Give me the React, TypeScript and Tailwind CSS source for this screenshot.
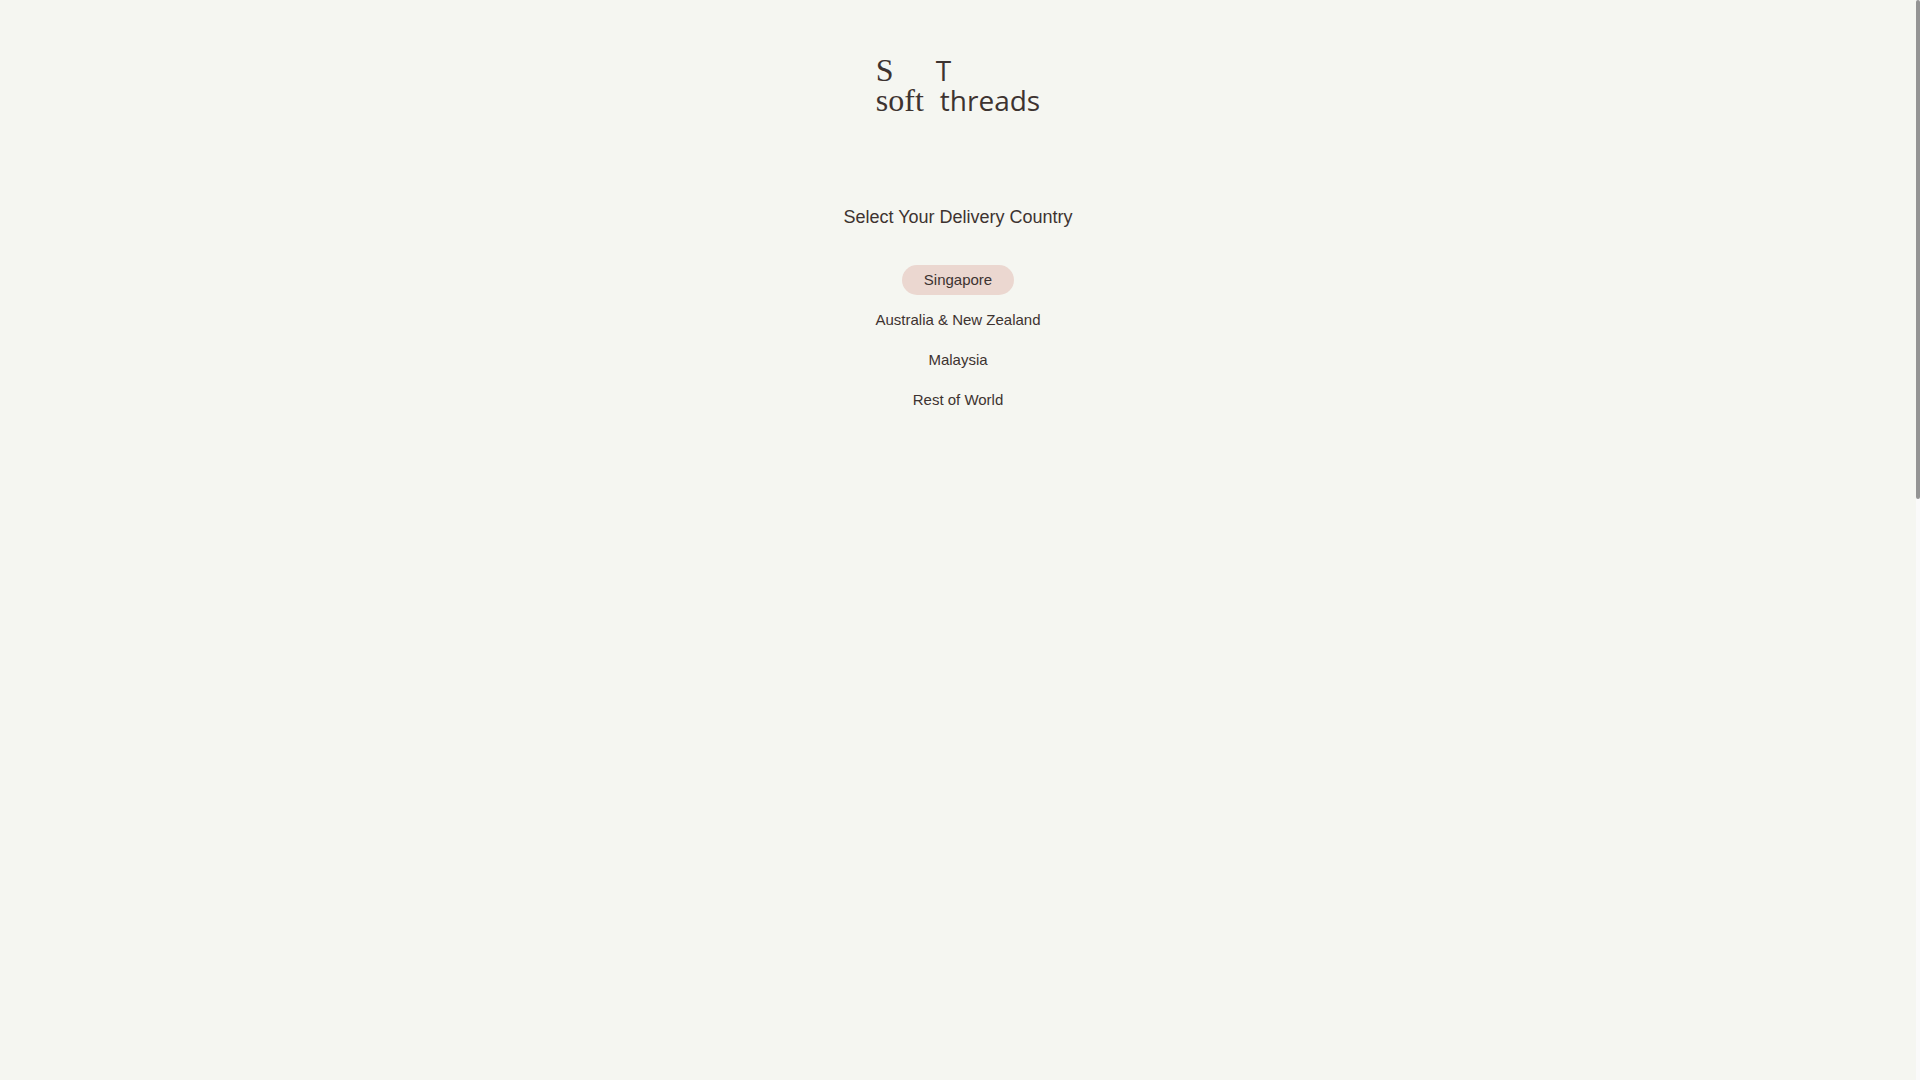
import { useState } from "react";
import { clsx } from "clsx";

const countries = ["Singapore", "Australia & New Zealand", "Malaysia", "Rest of World"];

function Logo() {
  return (
    <a href="#" aria-label="Soft Threads" className="grid grid-cols-[auto_auto] gap-x-4 leading-[30px]">
      <span className="font-['Liberation_Serif',serif] text-[32px]">S</span>
      <span className="-ml-1 font-['Open_Sans',sans-serif] text-[28px]">T</span>
      <span className="font-['Liberation_Serif',serif] text-[32px]">soft</span>
      <span className="font-['Open_Sans',sans-serif] text-[28px]">threads</span>
    </a>
  );
}

function CountryList() {
  const [selected, setSelected] = useState(countries[0]);

  return (
    <ul className="mt-[35px] flex flex-col items-center gap-[10px]">
      {countries.map((country) => (
        <li key={country} className="flex">
          <button
            type="button"
            onClick={() => setSelected(country)}
            aria-pressed={selected === country}
            className={clsx(
              "h-[30px] cursor-pointer rounded-full px-[22px] text-[15px]",
              selected === country && "bg-[#ebd7d0]",
            )}
          >
            {country}
          </button>
        </li>
      ))}
    </ul>
  );
}

export default function App() {
  return (
    <div className="flex min-h-screen bg-[#f5f6f1] font-['Liberation_Sans',Arial,sans-serif] text-[#3d3330]">
      <main className="flex flex-1 flex-col items-center pt-[55px]">
        <Logo />
        <h1 className="mt-[89px] text-[18px] leading-[26px]">Select Your Delivery Country</h1>
        <CountryList />
      </main>

      {/* Scroll track */}
      <div className="w-1 bg-[#fafafa]">
        <div className="h-[46.2vh] rounded-xs bg-[#949494]" />
      </div>
    </div>
  );
}
